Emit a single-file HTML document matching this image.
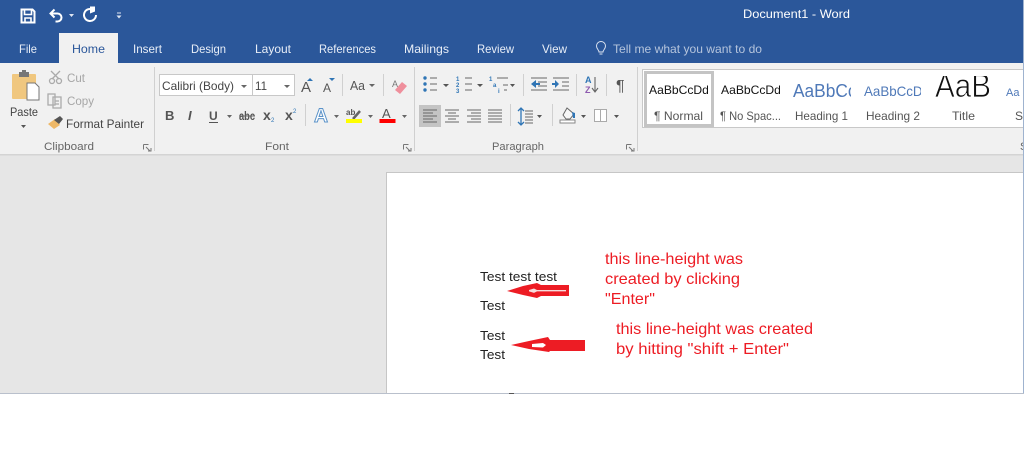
<!DOCTYPE html>
<html><head><meta charset="utf-8"><title>Document1 - Word</title>
<style>html,body{margin:0;padding:0;background:#fff;width:1024px;height:471px;overflow:hidden}svg{display:block}#r{filter:blur(.35px)}text{font-family:"Liberation Sans",sans-serif;font-size:12px;fill:#444}</style></head>
<body>
<svg id="r" width="1024" height="471" viewBox="0 0 1024 471" xmlns="http://www.w3.org/2000/svg">
<defs><style>.t{fill:#e8eef7}.g{fill:#666;font-size:11px}</style></defs>
<rect width="1024" height="471" fill="#fff"/>
<rect width="1024" height="63" fill="#2b579a"/>
<rect y="63" width="1024" height="91" fill="#f1f1f1"/>
<rect y="154" width="1024" height="239" fill="#e6e6e6"/>
<rect y="154" width="1024" height="1.5" fill="#d4d4d4"/>
<rect x="59" y="33" width="59" height="31" fill="#f1f1f1"/>
<rect x="386" y="172" width="638" height="221" fill="#fff"/>
<rect x="386" y="172" width="1" height="221" fill="#c6c6c6"/>
<rect x="386" y="172" width="638" height="1" fill="#c6c6c6"/>
<rect x="0" y="393" width="1024" height="1" fill="#b9c0cc"/>
<rect x="509" y="393" width="5" height="1" fill="#555"/>

<!-- QAT -->
<g fill="none" stroke="#fff">
<path d="M21.500 9.500h11l2 2v11h-13z" stroke-width="2"/><path d="M24.500 10v4.500h7V10M25 22.500v-4.500h6v4.500" stroke-width="1.600"/>
<path d="M51 13.500h6.500a4 4 0 0 1 0 8h-2" stroke-width="2"/><path d="M54.500 9.500l-4 4 4 4" stroke-width="2"/>
<path d="M93 9.800A6 6 0 1 0 96 15" stroke-width="2"/>
</g>
<path d="M90 6.500v7l5-2v-5z" fill="#fff"/>
<path d="M69 14h5l-2.500 3zM116.500 15.500h5l-2.500 3z" fill="#dfe6f2"/><rect x="117" y="12.500" width="4" height="1" fill="#dfe6f2"/>
<text x="743" y="18" class="t" textLength="107" lengthAdjust="spacingAndGlyphs" style="fill:#fff">Document1 - Word</text>

<!-- tabs -->
<text x="19" y="53" class="t" textLength="18" lengthAdjust="spacingAndGlyphs">File</text>
<text x="72" y="53" style="fill:#2b579a" textLength="33" lengthAdjust="spacingAndGlyphs">Home</text>
<text x="133" y="53" class="t" textLength="29" lengthAdjust="spacingAndGlyphs">Insert</text>
<text x="191" y="53" class="t" textLength="35" lengthAdjust="spacingAndGlyphs">Design</text>
<text x="255" y="53" class="t" textLength="36" lengthAdjust="spacingAndGlyphs">Layout</text>
<text x="319" y="53" class="t" textLength="57" lengthAdjust="spacingAndGlyphs">References</text>
<text x="404" y="53" class="t" textLength="45" lengthAdjust="spacingAndGlyphs">Mailings</text>
<text x="477" y="53" class="t" textLength="37" lengthAdjust="spacingAndGlyphs">Review</text>
<text x="542" y="53" class="t" textLength="25" lengthAdjust="spacingAndGlyphs">View</text>
<path d="M599 52c0-2-2.500-3-2.500-6a4.500 4.500 0 0 1 9 0c0 3-2.500 4-2.500 6zM599.500 54h3" fill="none" stroke="#dbe3f0" stroke-width="1"/>
<text x="613" y="53" style="fill:#b5c4dc" textLength="149" lengthAdjust="spacingAndGlyphs">Tell me what you want to do</text>

<!-- Clipboard -->
<rect x="12" y="74" width="24" height="25" rx="1" fill="#f0c77f"/>
<rect x="19" y="72" width="10" height="5" fill="#777"/><rect x="22" y="70" width="4" height="3" fill="#777"/>
<path d="M27 83h8l4 4v13H27z" fill="#fff" stroke="#777"/>
<text x="10" y="116" style="fill:#444" textLength="28" lengthAdjust="spacingAndGlyphs">Paste</text>
<path d="M21 125h5l-2.500 3z" fill="#555"/>
<g fill="none" stroke="#aaa" stroke-width="1.300">
<path d="M51 71l8 8M60 71l-8 8"/><circle cx="52" cy="81" r="2.500"/><circle cx="59" cy="81" r="2.500"/>
<path d="M48 94h7v11h-7zM53 97h8v11h-8zM55 101h4M55 104h4"/>
</g>
<text x="67" y="82" style="fill:#a6a6a6" textLength="18" lengthAdjust="spacingAndGlyphs">Cut</text>
<text x="67" y="105" style="fill:#a6a6a6" textLength="27" lengthAdjust="spacingAndGlyphs">Copy</text>
<path d="M48 124l7-5 5 6-6 4z" fill="#eeb867"/><path d="M54 120l6-4 3 3-4 5z" fill="#555"/>
<text x="66" y="128" style="fill:#444" textLength="78" lengthAdjust="spacingAndGlyphs">Format Painter</text>
<text x="44" y="150" class="g" textLength="50" lengthAdjust="spacingAndGlyphs">Clipboard</text>
<path d="M143.500 144.500h5M143.500 144.500v5M146 147l4 4M148 151h3v-3" fill="none" stroke="#777"/>
<rect x="154" y="67" width="1" height="84" fill="#d0d0d0"/>

<!-- Font -->
<rect x="159.500" y="74.500" width="135" height="21" fill="#fff" stroke="#c8c8c8"/>
<rect x="252" y="75" width="1" height="20" fill="#c8c8c8"/>
<text x="162" y="90" style="fill:#444" textLength="72" lengthAdjust="spacingAndGlyphs">Calibri (Body)</text>
<path d="M241 85h6l-3 3zM284 85h6l-3 3z" fill="#666"/>
<text x="255" y="90" style="fill:#444" textLength="12" lengthAdjust="spacingAndGlyphs">11</text>
<text x="301" y="92" style="fill:#555;font-size:15px">A</text><path d="M307 81l3-3 3 3z" fill="#2f75b5"/>
<text x="323" y="92" style="fill:#555;font-size:12px">A</text><path d="M329 78h6l-3 3z" fill="#2f75b5"/>
<rect x="342" y="74" width="1" height="22" fill="#d0d0d0"/>
<text x="350" y="90" style="fill:#555;font-size:13px" textLength="15" lengthAdjust="spacingAndGlyphs">Aa</text>
<path d="M369 84h6l-3 3z" fill="#666"/>
<rect x="383" y="74" width="1" height="22" fill="#d0d0d0"/>
<text x="392" y="87" style="fill:#777;font-size:9px">A</text>
<path d="M395 90l7-8 5 4-7 8z" fill="#ef8f9c"/>
<text x="165" y="120" style="fill:#555;font-weight:bold;font-size:13px">B</text>
<text x="188" y="120" style="fill:#555;font-style:italic;font-weight:bold;font-size:13px">I</text>
<text x="209" y="120" style="fill:#555;font-weight:bold;font-size:12px">U</text><rect x="209" y="122" width="9" height="1" fill="#555"/>
<path d="M227 115h5l-2.500 3z" fill="#666"/>
<text x="239" y="120" style="fill:#555;font-size:12px;font-weight:bold" textLength="16" lengthAdjust="spacingAndGlyphs">abc</text><rect x="239" y="115.500" width="16" height="1" fill="#666"/>
<text x="263" y="120" style="fill:#555;font-weight:bold;font-size:14px">x</text><text x="271" y="122" style="fill:#2f75b5;font-size:6px">2</text>
<text x="285" y="120" style="fill:#555;font-weight:bold;font-size:14px">x</text><text x="293" y="113" style="fill:#2f75b5;font-size:6px">2</text>
<rect x="305" y="104" width="1" height="22" fill="#d0d0d0"/>
<text x="314" y="122" style="fill:#fff;stroke:#5b93c9;stroke-width:1;font-size:19px;font-weight:bold" textLength="14" lengthAdjust="spacingAndGlyphs">A</text>
<path d="M334 115h5l-2.500 3zM368 115h5l-2.500 3zM402 115h5l-2.500 3z" fill="#666"/>
<text x="346" y="115" style="fill:#555;font-size:8px;font-weight:bold">ab</text>
<path d="M353 119l7-8" stroke="#666" stroke-width="2.500"/>
<rect x="346" y="119" width="16" height="4" fill="#ffff00"/>
<text x="382" y="118" style="fill:#555;font-size:13px">A</text>
<rect x="379.500" y="119" width="16" height="4" fill="#f00"/>
<text x="265" y="150" class="g" textLength="24" lengthAdjust="spacingAndGlyphs">Font</text>
<path d="M403.500 144.500h5M403.500 144.500v5M406 147l4 4M408 151h3v-3" fill="none" stroke="#777"/>
<rect x="414" y="67" width="1" height="84" fill="#d0d0d0"/>

<!-- Paragraph -->
<g fill="#2f75b5"><circle cx="425" cy="78" r="1.700"/><circle cx="425" cy="84" r="1.700"/><circle cx="425" cy="90" r="1.700"/></g>
<path d="M430 78h7M430 84h7M430 90h7M465 78h7M465 84h7M465 90h7M497 78h11M503 85h5M504 90h3" stroke="#666" stroke-width="1.100" fill="none"/>
<text x="456" y="81" style="fill:#2f75b5;font-size:6px;font-weight:bold">1</text><text x="456" y="87" style="fill:#2f75b5;font-size:6px;font-weight:bold">2</text><text x="456" y="93" style="fill:#2f75b5;font-size:6px;font-weight:bold">3</text>
<text x="489" y="81" style="fill:#2f75b5;font-size:6px;font-weight:bold">1</text><text x="493" y="87" style="fill:#2f75b5;font-size:6px;font-weight:bold">a</text><text x="498" y="93" style="fill:#2f75b5;font-size:6px;font-weight:bold">i</text>
<path d="M443 84h6l-3 3zM477 84h6l-3 3zM510 84h5l-2.500 3z" fill="#555"/>
<rect x="523" y="74" width="1" height="22" fill="#d0d0d0"/>
<path d="M531 78h16M538 82h9M538 86h9M531 90h16M553 78h16M562 82h7M562 86h7M553 90h16" stroke="#666" fill="none"/>
<path d="M531 84l5-4v3h4v2h-4v3zM559 84l-4-4v3h-3v2h3v3z" fill="#2f75b5"/>
<rect x="576" y="74" width="1" height="22" fill="#d0d0d0"/>
<text x="585" y="83" style="fill:#2f75b5;font-size:9px;font-weight:bold">A</text><text x="585" y="93" style="fill:#8e5bb0;font-size:9px;font-weight:bold">Z</text>
<path d="M595 77v14M592 88l3 4 3-4" fill="none" stroke="#666" stroke-width="1.100"/>
<rect x="606" y="74" width="1" height="22" fill="#d0d0d0"/>
<text x="616" y="91" style="fill:#555;font-size:16px">¶</text>

<rect x="419" y="105" width="22" height="22" fill="#c4c4c4"/>
<path d="M423 110h14M423 113h10M423 116h14M423 119h10M423 122h14M445 110h14M448 113h8M445 116h14M448 119h8M445 122h14M467 110h14M471 113h10M467 116h14M471 119h10M467 122h14M488 110h14M488 113h14M488 116h14M488 119h14M488 122h14" stroke="#666" fill="none"/>
<rect x="510" y="104" width="1" height="22" fill="#d0d0d0"/>
<path d="M521 109v15M518 111l3-3 3 3M518 122l3 3 3-3" fill="none" stroke="#2f75b5" stroke-width="1.300"/>
<path d="M525 111h8M525 114h8M525 117h8M525 120h8M525 123h8" stroke="#666" fill="none"/>
<path d="M537 115h5l-2.500 3z" fill="#555"/>
<rect x="552" y="104" width="1" height="22" fill="#d0d0d0"/>
<path d="M563 115l4-7 7 6-4 5h-4z" fill="#f6f6f6" stroke="#666"/><path d="M572 112l3 1 0 5-2 0z" fill="#2f75b5"/>
<rect x="560" y="120" width="15" height="3" fill="#fff" stroke="#888"/>
<path d="M581 115h5l-2.500 3zM614 115h5l-2.500 3z" fill="#555"/>
<rect x="594.500" y="109.500" width="12" height="12" fill="#fff" stroke="#aaa"/><path d="M600.500 109v13" stroke="#aaa"/>
<text x="492" y="150" class="g" textLength="52" lengthAdjust="spacingAndGlyphs">Paragraph</text>
<path d="M626.500 144.500h5M626.500 144.500v5M629 147l4 4M631 151h3v-3" fill="none" stroke="#777"/>
<rect x="637" y="67" width="1" height="84" fill="#d0d0d0"/>

<!-- Styles -->
<rect x="642.500" y="69.500" width="382" height="58" fill="#fff" stroke="#c8c8c8"/>
<rect x="645.500" y="72.500" width="67" height="53" fill="#fff" stroke="#c4c4c4" stroke-width="3"/>
<svg x="649" y="74" width="59" height="26"><text x="0" y="20" style="fill:#111;font-size:12px" textLength="68" lengthAdjust="spacingAndGlyphs">AaBbCcDdE</text></svg>
<svg x="721" y="74" width="59" height="26"><text x="0" y="20" style="fill:#111;font-size:12px" textLength="68" lengthAdjust="spacingAndGlyphs">AaBbCcDdE</text></svg>
<svg x="793" y="70" width="58" height="30"><text x="0" y="27" style="fill:#4f79b8;font-size:18px" textLength="76" lengthAdjust="spacingAndGlyphs">AaBbCcD</text></svg>
<svg x="864" y="70" width="57" height="30"><text x="0" y="26" style="fill:#4f79b8;font-size:14px" textLength="66" lengthAdjust="spacingAndGlyphs">AaBbCcDd</text></svg>
<svg x="934" y="76" width="60" height="24"><text x="1" y="21" style="fill:#111;font-size:33px;stroke:#fff;stroke-width:.8" textLength="56" lengthAdjust="spacingAndGlyphs">AaB</text></svg>
<text x="1006" y="96" style="fill:#4f79b8;font-size:11px">Aa</text>
<text x="654" y="120" style="fill:#555" textLength="49" lengthAdjust="spacingAndGlyphs">¶ Normal</text>
<text x="720" y="120" style="fill:#555" textLength="61" lengthAdjust="spacingAndGlyphs">¶ No Spac...</text>
<text x="795" y="120" style="fill:#555" textLength="53" lengthAdjust="spacingAndGlyphs">Heading 1</text>
<text x="866" y="120" style="fill:#555" textLength="54" lengthAdjust="spacingAndGlyphs">Heading 2</text>
<text x="952" y="120" style="fill:#555" textLength="23" lengthAdjust="spacingAndGlyphs">Title</text>
<text x="1015" y="120" style="fill:#555">Su</text>
<text x="1020" y="150" class="g">S</text>

<!-- Document -->
<text x="480" y="281" style="fill:#222;font-size:13px" textLength="77" lengthAdjust="spacingAndGlyphs">Test test test</text>
<text x="480" y="310" style="fill:#222;font-size:13px" textLength="25" lengthAdjust="spacingAndGlyphs">Test</text>
<text x="480" y="340" style="fill:#222;font-size:13px" textLength="25" lengthAdjust="spacingAndGlyphs">Test</text>
<text x="480" y="359" style="fill:#222;font-size:13px" textLength="25" lengthAdjust="spacingAndGlyphs">Test</text>
<path d="M507 291l16-5 14-3 4 2h28v11h-28l-4 2-14-3z" fill="#ed1c24"/>
<path d="M529 290l5-1.500 3 1.500h29v1.400h-29l-3 1.500-5-1.500z" fill="#f7dcdc"/>
<path d="M511 345l18-4 19-4 2 3h35v11h-35l-1 1-20-3z" fill="#ed1c24"/>
<path d="M532 344l11-1 3 2-3 2.500-11-.5z" fill="#fff"/>
<text x="605" y="264" style="fill:#ed1c24;font-size:16px" textLength="138" lengthAdjust="spacingAndGlyphs">this line-height was</text>
<text x="605" y="284" style="fill:#ed1c24;font-size:16px" textLength="135" lengthAdjust="spacingAndGlyphs">created by clicking</text>
<text x="605" y="304" style="fill:#ed1c24;font-size:16px" textLength="50" lengthAdjust="spacingAndGlyphs">"Enter"</text>
<text x="616" y="334" style="fill:#ed1c24;font-size:16px" textLength="197" lengthAdjust="spacingAndGlyphs">this line-height was created</text>
<text x="616" y="354" style="fill:#ed1c24;font-size:16px" textLength="173" lengthAdjust="spacingAndGlyphs">by hitting "shift + Enter"</text>
<rect x="1023" y="0" width="1" height="393" fill="#9fb3cf"/>
</svg>
</body></html>
